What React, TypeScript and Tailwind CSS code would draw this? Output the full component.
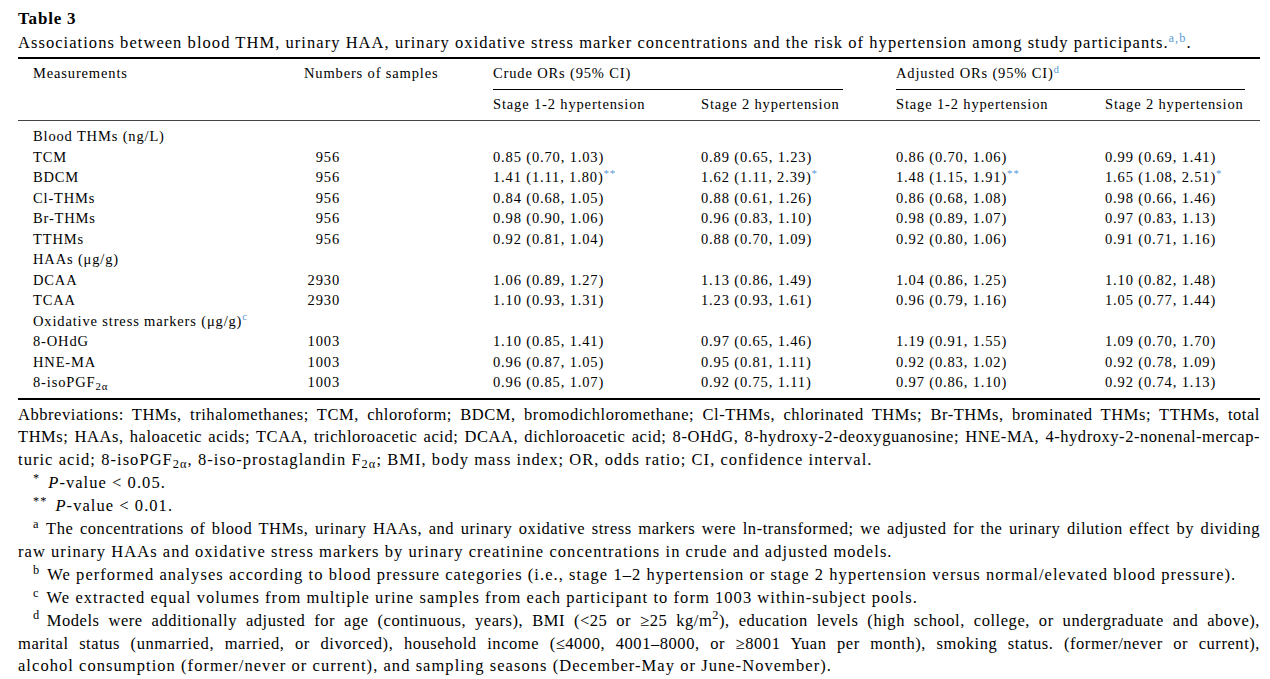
import React from "react";

const Mk = ({ s }: { s: string }) => <sup className="text-[#5b9bd5]">{s}</sup>;

type DataRow = {
  label: React.ReactNode;
  n?: string;
  v?: React.ReactNode[];
};

const rows: DataRow[] = [
  { label: "Blood THMs (ng/L)" },
  { label: "TCM", n: "956", v: ["0.85 (0.70, 1.03)", "0.89 (0.65, 1.23)", "0.86 (0.70, 1.06)", "0.99 (0.69, 1.41)"] },
  {
    label: "BDCM",
    n: "956",
    v: [
      <>1.41 (1.11, 1.80)<Mk s="**" /></>,
      <>1.62 (1.11, 2.39)<Mk s="*" /></>,
      <>1.48 (1.15, 1.91)<Mk s="**" /></>,
      <>1.65 (1.08, 2.51)<Mk s="*" /></>,
    ],
  },
  { label: "Cl-THMs", n: "956", v: ["0.84 (0.68, 1.05)", "0.88 (0.61, 1.26)", "0.86 (0.68, 1.08)", "0.98 (0.66, 1.46)"] },
  { label: "Br-THMs", n: "956", v: ["0.98 (0.90, 1.06)", "0.96 (0.83, 1.10)", "0.98 (0.89, 1.07)", "0.97 (0.83, 1.13)"] },
  { label: "TTHMs", n: "956", v: ["0.92 (0.81, 1.04)", "0.88 (0.70, 1.09)", "0.92 (0.80, 1.06)", "0.91 (0.71, 1.16)"] },
  { label: "HAAs (μg/g)" },
  { label: "DCAA", n: "2930", v: ["1.06 (0.89, 1.27)", "1.13 (0.86, 1.49)", "1.04 (0.86, 1.25)", "1.10 (0.82, 1.48)"] },
  { label: "TCAA", n: "2930", v: ["1.10 (0.93, 1.31)", "1.23 (0.93, 1.61)", "0.96 (0.79, 1.16)", "1.05 (0.77, 1.44)"] },
  { label: <>Oxidative stress markers (μg/g)<Mk s="c" /></> },
  { label: "8-OHdG", n: "1003", v: ["1.10 (0.85, 1.41)", "0.97 (0.65, 1.46)", "1.19 (0.91, 1.55)", "1.09 (0.70, 1.70)"] },
  { label: "HNE-MA", n: "1003", v: ["0.96 (0.87, 1.05)", "0.95 (0.81, 1.11)", "0.92 (0.83, 1.02)", "0.92 (0.78, 1.09)"] },
  {
    label: <>8-isoPGF<sub>2α</sub></>,
    n: "1003",
    v: ["0.96 (0.85, 1.07)", "0.92 (0.75, 1.11)", "0.97 (0.86, 1.10)", "0.92 (0.74, 1.13)"],
  },
];

const cols = "grid grid-cols-[271px_189px_208px_195px_209px_1fr] pl-[15px]";

// one justified line of a footnote
const JLine = ({ children }: { children: React.ReactNode }) => (
  <div className="whitespace-nowrap tracking-[0.55px] text-justify [text-align-last:justify]">{children}</div>
);

export default function App() {
  return (
    <div className="min-h-[679px] w-[1270px] bg-white pl-[18px] pr-[10px] pt-[8px] text-black font-['Liberation_Serif',serif]">
      <div className="text-[17px] font-bold leading-[21px] tracking-[0.8px]">Table 3</div>
      <div className="text-[16.5px] leading-[23px] mt-[2px] tracking-[1.05px] whitespace-nowrap">
        Associations between blood THM, urinary HAA, urinary oxidative stress marker concentrations and the risk of
        hypertension among study participants.<Mk s="a,b" />.
      </div>

      {/* table */}
      <div className="mt-[3px] text-[14.5px] tracking-[0.85px]">
        <div className="h-[2px] bg-black" />
        <div className={`${cols} h-[30px] items-center`}>
          <div>Measurements</div>
          <div>Numbers of samples</div>
          <div className="col-span-2">Crude ORs (95% CI)</div>
          <div className="col-span-2">
            Adjusted ORs (95% CI)<Mk s="d" />
          </div>
        </div>
        <div className={`${cols} h-px`}>
          <div />
          <div />
          <div className="col-span-2 w-[350px] h-px bg-black" />
          <div className="col-span-2 w-[349px] h-px bg-black" />
        </div>
        <div className={`${cols} h-[30px] items-center`}>
          <div />
          <div />
          <div>Stage 1-2 hypertension</div>
          <div>Stage 2 hypertension</div>
          <div>Stage 1-2 hypertension</div>
          <div>Stage 2 hypertension</div>
        </div>
        <div className="h-px bg-[#444]" />
        <div className="py-[5px]">
          {rows.map((r, i) => (
            <div key={i} className={`${cols} h-[20.5px] items-center leading-[20px]`}>
              <div className="whitespace-nowrap">{r.label}</div>
              <div>
                {r.n && <span className="inline-block w-[36px] text-right">{r.n}</span>}
              </div>
              {r.v ? r.v.map((c, j) => <div key={j} className="whitespace-nowrap">{c}</div>) : null}
            </div>
          ))}
        </div>
        <div className="h-[2px] bg-black" />
      </div>

      {/* footnotes */}
      <div className="mt-[4px] text-[16.5px] leading-[22.9px] tracking-[1.05px]">
        <JLine>
          Abbreviations: THMs, trihalomethanes; TCM, chloroform; BDCM, bromodichloromethane; Cl-THMs, chlorinated THMs;
          Br-THMs, brominated THMs; TTHMs, total
        </JLine>
        <JLine>
          THMs; HAAs, haloacetic acids; TCAA, trichloroacetic acid; DCAA, dichloroacetic acid; 8-OHdG,
          8-hydroxy-2-deoxyguanosine; HNE-MA, 4-hydroxy-2-nonenal-mercap-
        </JLine>
        <div>
          turic acid; 8-isoPGF<sub>2α</sub>, 8-iso-prostaglandin F<sub>2α</sub>; BMI, body mass index; OR, odds ratio; CI,
          confidence interval.
        </div>
        <div className="pl-[15px]">
          <sup className="mr-[8px]">*</sup>
          <i>P</i>-value &lt; 0.05.
        </div>
        <div className="pl-[15px]">
          <sup className="mr-[8px]">**</sup>
          <i>P</i>-value &lt; 0.01.
        </div>
        <div className="pl-[15px]">
          <JLine>
            <sup className="mr-[7px]">a</sup>The concentrations of blood THMs, urinary HAAs, and urinary oxidative stress
            markers were ln-transformed; we adjusted for the urinary dilution effect by dividing
          </JLine>
        </div>
        <div>raw urinary HAAs and oxidative stress markers by urinary creatinine concentrations in crude and adjusted models.</div>
        <div className="pl-[15px] whitespace-nowrap">
          <sup className="mr-[7px]">b</sup>We performed analyses according to blood pressure categories (i.e., stage 1–2
          hypertension or stage 2 hypertension versus normal/elevated blood pressure).
        </div>
        <div className="pl-[15px]">
          <sup className="mr-[7px]">c</sup>We extracted equal volumes from multiple urine samples from each participant to
          form 1003 within-subject pools.
        </div>
        <div className="pl-[15px]">
          <JLine>
            <sup className="mr-[7px]">d</sup>Models were additionally adjusted for age (continuous, years), BMI (&lt;25 or
            ≥25 kg/m<sup>2</sup>), education levels (high school, college, or undergraduate and above),
          </JLine>
        </div>
        <JLine>
          marital status (unmarried, married, or divorced), household income (≤4000, 4001–8000, or ≥8001 Yuan per month),
          smoking status. (former/never or current),
        </JLine>
        <div>alcohol consumption (former/never or current), and sampling seasons (December-May or June-November).</div>
      </div>
    </div>
  );
}
